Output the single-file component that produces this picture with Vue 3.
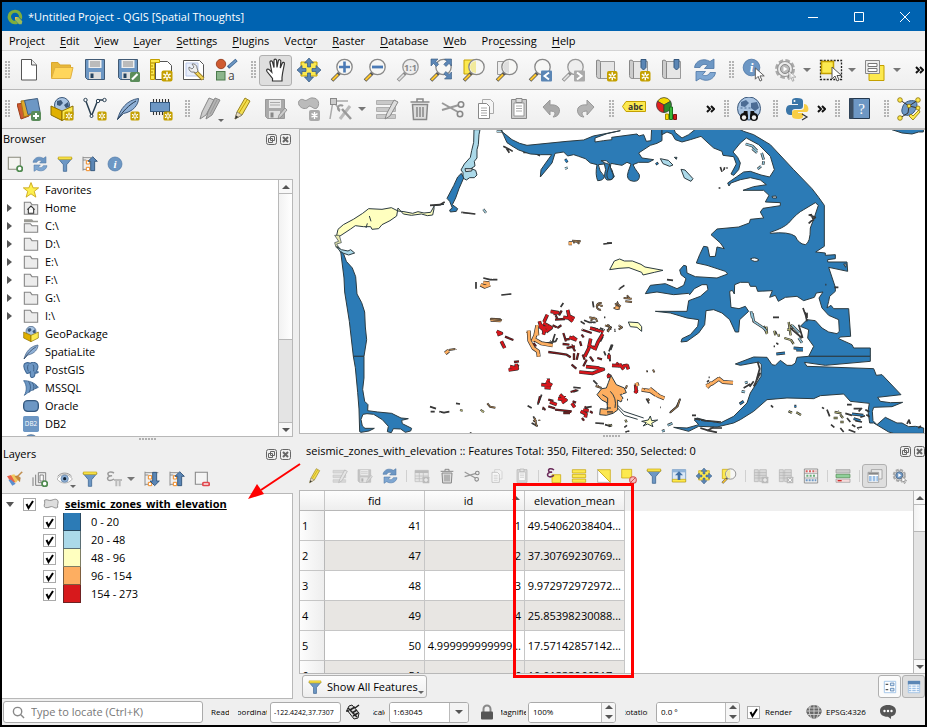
<script setup>
import { ref } from 'vue'

const menus = [
  ['Pro', 'j', 'ect'], ['', 'E', 'dit'], ['', 'V', 'iew'], ['', 'L', 'ayer'], ['', 'S', 'ettings'],
  ['', 'P', 'lugins'], ['Vect', 'o', 'r'], ['', 'R', 'aster'], ['', 'D', 'atabase'], ['', 'W', 'eb'],
  ['Pro', 'c', 'essing'], ['', 'H', 'elp'],
]

const btn = (icon, label, extra = {}) => ({ kind: 'btn', icon, label, ...extra })
const grip = { kind: 'grip' }

const mainTools = [
  grip,
  btn('new', 'New Project'), btn('open', 'Open Project'), btn('save', 'Save Project'),
  btn('saveas', 'Save Project As'), btn('newlayout', 'New Print Layout'),
  btn('layouts', 'Layout Manager'), btn('style', 'Style Manager'),
  grip,
  btn('pan', 'Pan Map', { on: true }), btn('pansel', 'Pan to Selection'), btn('zoomin', 'Zoom In'),
  btn('zoomout', 'Zoom Out'), btn('zoomnative', 'Zoom to Native Resolution'), btn('zoomfull', 'Zoom Full'),
  btn('zoomsel', 'Zoom to Selection'), btn('zoomlayer', 'Zoom to Layer'), btn('zoomlast', 'Zoom Last'),
  btn('zoomnext', 'Zoom Next'), btn('newmap', 'New Map View'), btn('newbook', 'New Bookmark'),
  btn('book', 'Show Bookmarks'), btn('refresh', 'Refresh'),
  grip,
  btn('identify', 'Identify'), btn('action', 'Run Action', { drop: true }),
  btn('select', 'Select Features', { drop: true }), btn('form', 'Select by Value', { drop: true }),
  { kind: 'more', cls: 'push' },
]
const layerTools = [
  grip,
  btn('datasource', 'Data Source Manager'), btn('newgpkg', 'New GeoPackage'), btn('newshape', 'New Shapefile'),
  btn('newspatial', 'New SpatiaLite'), btn('newmem', 'New Memory Layer'),
  grip,
  btn('edits', 'Current Edits', { tiny: true }), btn('pencil', 'Toggle Editing'), btn('saveedit', 'Save Edits'),
  btn('addpoly', 'Add Polygon'), btn('vertex', 'Vertex Tool', { drop: true }),
  btn('multiedit', 'Modify Attributes'), btn('trash', 'Delete Selected'), btn('cut', 'Cut'), btn('copy', 'Copy'),
  btn('paste', 'Paste'), btn('undo', 'Undo'), btn('redo', 'Redo'),
  grip,
  btn('abc', 'Labeling'), btn('diagram', 'Diagrams'), { kind: 'more', cls: 'wide' },
  grip, btn('metasearch', 'MetaSearch'),
  grip, btn('python', 'Python Console'), { kind: 'more', cls: '' },
  grip, btn('help', 'Help'),
  grip, btn('topology', 'Topology Checker'),
]
const browserTools = [btn('addlayer', 'Add Layer'), btn('refresh', 'Refresh'), btn('filter', 'Filter'), btn('collapse', 'Collapse All'), btn('info', 'Properties')]
const layersTools = [
  btn('brush', 'Layer Styling'), btn('addgroup', 'Add Group'), btn('eye', 'Map Themes', { tiny: true }),
  btn('filter', 'Filter Legend'), btn('epsfilter', 'Filter by Expression', { drop: true }),
  btn('expand', 'Expand All'), btn('collapse', 'Collapse All'), btn('remove', 'Remove Layer'),
]
const tableTools = [
  btn('pencil', 'Toggle Editing'), btn('multiedit', 'Multi Edit', { dim: true }), btn('saveedit', 'Save Edits', { dim: true }), btn('refresh', 'Reload'),
  { kind: 'sep' },
  btn('addrow', 'Add Feature', { dim: true }), btn('trash', 'Delete Features'), btn('cut', 'Cut'), btn('copy', 'Copy', { dim: true }), btn('paste', 'Paste', { dim: true }),
  { kind: 'sep' },
  btn('epssel', 'Select by Expression'), btn('selall', 'Select All'), btn('invert', 'Invert Selection'),
  btn('desel', 'Deselect'), btn('filter', 'Filter'), btn('movetop', 'Move to Top'), btn('pansel', 'Pan to Rows'),
  btn('zoomsel', 'Zoom to Rows'),
  { kind: 'sep' },
  btn('newfield', 'New Field', { dim: true }), btn('delfield', 'Delete Field', { dim: true }), btn('calc', 'Field Calculator'),
  { kind: 'sep' }, btn('condfmt', 'Conditional Formatting'),
  { kind: 'sep' }, btn('dock', 'Dock Table', { on: true }), btn('actions', 'Actions'),
]

const tree = [
  { icon: 'star', name: 'Favorites' },
  { icon: 'home', name: 'Home', arrow: true },
  { icon: 'drive', name: 'C:\\', arrow: true },
  { icon: 'folder', name: 'D:\\', arrow: true },
  { icon: 'folder', name: 'E:\\', arrow: true },
  { icon: 'folder', name: 'F:\\', arrow: true },
  { icon: 'folder', name: 'G:\\', arrow: true },
  { icon: 'folder', name: 'I:\\', arrow: true },
  { icon: 'gpkg', name: 'GeoPackage' },
  { icon: 'feather', name: 'SpatiaLite' },
  { icon: 'elephant', name: 'PostGIS' },
  { icon: 'mssql', name: 'MSSQL' },
  { icon: 'oracle', name: 'Oracle' },
  { icon: 'db2', name: 'DB2' },
  { icon: 'globe', name: '' },
]

const classes = ref([
  { c: 'c1', label: '0 - 20', on: true },
  { c: 'c2', label: '20 - 48', on: true },
  { c: 'c3', label: '48 - 96', on: true },
  { c: 'c4', label: '96 - 154', on: true },
  { c: 'c5', label: '154 - 273', on: true },
])
const layerOn = ref(true)
const render = ref(true)

const rows = [
  ['1', '41', '1', '49.54062038404...'],
  ['2', '47', '2', '37.30769230769...'],
  ['3', '48', '3', '9.972972972972...'],
  ['4', '49', '4', '25.85398230088...'],
  ['5', '50', '4.999999999999...', '17.57142857142...'],
  ['6', '51', '6', '10.01333966317...'],
]

// Small zones drawn as outlined streaks: w is the outline width, f the fill width.
const west = [
  { col: '#555', w: 5, f: 1, d: 'M390 232l30-2 14-8 M484 253l42 5 M604 501l30-3 M528 462v20 M550 450l20 5 22 0 M910 348l26-3 M390 836l18 6 M392 851h12 M418 851l14 3 16-3 M468 826l12 2 M610 55l20 10 8 5 M620 62l8 12 M670 73l30 0 20 10 M878 520l3 18 M790 525l-8 12 M852 577l15 6 20 0 M842 580l12 8 M912 568h4 M925 590l8 15 M945 608v3 M935 650l-8 20 M912 670l5 12 M925 680l6 20 M886 885l26 2 M915 890l15 4 M683 833l12 7 M700 865l8 15 M695 885l18 10 M820 778l22 2 M820 792l15-5 M725 800l-12 30 M860 838l15-2 M765 618l-8 25-20 2 M772 630l-5 10-20 4 M880 757l12 12 M512 912v2 M958 482v3 M900 600l14 6' },
  { col: '#8d1318', w: 7, f: 3, d: 'M790 615l8 25 M745 672l30 4 25 4 12 8 M815 650l10 20 M822 676v20 M800 660l25-5 M835 675l-5 20 M848 680l6 15 M615 626l25 10 M642 702l15-2 M645 710l12 4 M767 562l5 10 M785 548l-8 14 M765 575l30-2 M720 805l-5 20 M728 838l8 8 M765 845l50 5 M790 855h20 M745 815l15 4 M812 792l18-6 M818 820l10 4 M855 835l6 10 M870 850l8 5 M846 870l6 8 M875 600l20 5 M795 635l14-2 M845 620l6 8 M900 640l8-15 M845 605l30 10 M860 695l-10 20 M758 592l12 6 M772 600l12-8 M788 648l20 2 M840 640l4 14 M815 710l14 12 M870 686l10 14 M892 690l14 4 M745 835l20 6 M700 645l8 10' },
  { col: '#d7191c', w: 11, f: 7, d: 'M718 580l6 20 14 8 M742 560l-10 22 M752 550l22 4-14 2 M716 596l34 4 M730 585l24 14-16 12 M803 546l4 18 16 8 M790 568l16 2 12 10 M740 610l10-14 M725 590l8 24 M870 600l40 12 M908 618l-14 24-10 24 M872 632l-6 30-12 24 M864 650l22 12 M808 628l22 8 M838 732l40 4 32-12-16-2 M590 610l14 6-12 4 M604 640l6 12 4 8 M626 726l26-4-4-14 M630 716l18 4 M724 770l26 2 M738 762l18 10 M740 757l10 0 M734 778l18 2 M780 800l14 14 M774 812l24 4-12 8 M790 804v16 M750 822l20 8 M816 826l8 12 M842 850l16 8-2 10 M850 846l16 2 M948 706l12 8 M922 740l10 6 M858 716l40 4 M735 605l-5 15 M816 626l14 10' },
  { col: '#fdae61', w: 12, f: 8, d: 'M686 608l2 30 12 22 14 10 2 16 M712 592l-6 30-8 18 M700 632l24 14 34 6 M806 346h10 M436 676l10-8 M542 470l12 6 16-6 M550 464l18 2 M950 530l10 8 M572 575l30 2 M710 600l2 22' },
  { col: '#a07a50', w: 6, f: 3, d: 'M816 338l26 2 M820 345l8-6 10 8 M446 666l20-3 M570 573l36 4 M905 525c-22-2-16 24-2 20 M890 530l18 4 M868 568l20 4 4 10 M872 578l12-10 M915 592l18 6-12 10 M562 826l8 10 16 3 M945 530l10-6 M905 780l-18-6 M704 870l6 25 M718 875v4 M700 880l8-6' },
  { col: '#b9b97a', w: 6, f: 3, d: 'M480 846l8 2 M542 845l10 8 M925 890l8 4 M545 850h6' },
  { col: '#abd9e9', w: 7, f: 4, d: 'M550 244l8 10 M795 122l8-3 M590 10l18 0' },
  { col: '#2c7bb6', w: 12, f: 8, d: 'M796 100l6-4' },
]
const east = [
  { col: '#555', w: 5, f: 1, d: 'M0 345h14 M38 482l14-10 M180 455l18 2 M17 650l-6 16 M5 675l4 24 M340 117l5 14 M350 128l3-10 M358 120h4 M335 180h5 M498 568l18 0 M588 540l8 22 4 18 M600 570v-16 M605 260l20 8-20 18 M612 258l8 20 M682 478h12 M22 605h3 M118 812l8 14 M220 812l-12 25-20 18 M160 838h2 M305 748h3 M300 762l6-5 M60 815h3 M505 610l4 8 M508 645l6 4 M500 655h4 M492 832l6 6 M545 850l8 4 M255 862l12 0 M262 872l30 6 50 4 M280 900l25 8 25 5 M310 900l35 0 M300 908l20-10 M55 912l12-3 M5 895l10-3 M52 898l8-6 M645 838l6 4 M660 845l8 20 M720 830l14 0 M740 842h24 M765 840l-10 10 M715 856l20 6 M745 878l20 4 M760 868l14-5 M720 870l10 12 M735 890l10 6 M672 890l10 8 M700 900l10 12 M725 905l20 8 M750 900l15-3 M775 845l12 6 M778 860l10 6 M452 702l6 20-14 50 M440 760l-12 16 M460 735l-20 40 M410 780l20-12 M900 888l6-12 4 12 M934 900l8-6 M655 470h3 M575 590l12 40 M550 600l35 30 M120 730h3' },
  { col: '#a07a50', w: 6, f: 3, d: 'M50 510l24 2 M55 520l20 2 M20 540l18 2 M30 530l8 8 M60 502l10 12 M0 590l10 8-8 14 M35 592l10 6-10 6 M138 725l4 8 M122 812l5 6 M118 730h2 M60 772l-4 10 M218 815l-6 20-22 18 M0 853l18 0' },
  { col: '#b9b97a', w: 7, f: 3, d: 'M545 582l6 40 M552 590l8 12 M540 605h10 M470 594l10 24 M478 596l2 20 M502 608l3 14 M514 618l2 8 M532 630l20 6 8 12 M568 853l14 8 M683 852l20 4 M700 860l8 10 M680 870h12 M700 882h10 M545 850l10 4 M55 875l4 8 M10 890l4 4' },
  { col: '#8fc3d8', w: 8, f: 4, d: 'M436 556l4 24 30 20 8 8 M432 550l4 20 M555 592l22 22 M575 630l10 14 M416 48l20 6 14 14 M436 62l14 12 M464 75l6 20 M470 100l-2 10 M462 115l-10 8 M165 910l8-3 M182 892l14-6 M414 765l8-3 M404 790l10 2' },
  { col: '#2c7bb6', w: 9, f: 4, d: 'M508 678l26-3 M560 660l28 2 M568 666l20 0 M562 835h6 M398 828l12-8 M148 104l4 6 M735 858l34 4 M740 872l20 6' },
  { col: '#d7191c', w: 11, f: 7, d: 'M15 712l30 2 M38 708l12 16 M60 710l4 14 M48 714l14-2 M0 745h6 M86 770l2 25 M90 785l-6 10 M6 680v12' },
  { col: '#fdae61', w: 12, f: 8, d: 'M104 785l26 4 18 12 24 10 M128 782l30 24 M298 774l18-8 20-14 12 10 30 2 M300 778l14-14 M25 538l10 2 M88 764l4 10' },
]
</script>

<template>
  <div class="window">
    <!-- shared icon shapes -->
    <svg class="defs" aria-hidden="true">
      <defs>
        <filter id="rough" x="-5%" y="-5%" width="110%" height="110%"><feTurbulence type="fractalNoise" baseFrequency=".12" numOctaves="2" seed="4" result="n" /><feDisplacementMap in="SourceGraphic" in2="n" scale="5" xChannelSelector="R" yChannelSelector="G" /></filter>
        <symbol id="star9" viewBox="0 0 12 12"><rect x=".5" y=".5" width="11" height="11" rx="2" fill="#c4a000" /><path d="M6 1.800v8.400M2.400 3.900l7.200 4.200M9.600 3.900L2.400 8.100" stroke="#fff" stroke-width="1.500" /><circle cx="6" cy="6" r="1.100" fill="#c4a000" /></symbol>
        <symbol id="lens" viewBox="0 0 24 24"><path d="M2 22.500L9.500 15" stroke="#555" stroke-width="3.600" /><path d="M2.500 22L8 16.500" stroke="#fcc62d" stroke-width="2.200" /><circle cx="14.500" cy="9" r="7.700" fill="#f7f7f5" stroke="#888" stroke-width="1.300" /></symbol>
        <symbol id="lensgray" viewBox="0 0 24 24"><path d="M2 22.500L9.500 15" stroke="#888" stroke-width="3.600" /><path d="M2.500 22L8 16.500" stroke="#ddd" stroke-width="2" /><circle cx="14.500" cy="9" r="7.700" fill="#eee" stroke="#999" stroke-width="1.300" /></symbol>
        <symbol id="cursor" viewBox="0 0 12 16"><path d="M1 1v12l3-3 2 5 2-1-2-4.500h4.500z" fill="#fff" stroke="#555" stroke-width="1" /></symbol>
        <symbol id="i-new" viewBox="0 0 24 24"><path d="M4.500 1.500h10l5 5.500v15h-15z" fill="#fff" stroke="#555" /><path d="M14.500 1.500V7h5" fill="#eee" stroke="#555" /></symbol>
        <symbol id="i-open" viewBox="0 0 24 24"><path d="M1.500 20V4.500H8l2 2.500h10.500v4" fill="#e8b83a" stroke="#d9a72d" /><path d="M1.500 20.500L5 9.500h18L20.500 20.500z" fill="#ffd65b" stroke="#e0b040" /></symbol>
        <symbol id="i-save" viewBox="0 0 24 24"><path d="M2.500 1.500h19v20H4.500l-2-2z" fill="#6d97c4" stroke="#415a75" /><path d="M5.500 2h13v8h-13z" fill="#eee" /><path d="M7 4h10M7 6h10M7 8h10" stroke="#888" /><path d="M6 14h12v7H6z" fill="#ddd" /><path d="M7.500 15.500h3v4.500h-3z" fill="#24425f" /></symbol>
        <symbol id="i-saveas" viewBox="0 0 24 24"><use href="#i-save" width="24" height="24" /><rect x="14" y="14" width="10" height="10" rx="1.500" fill="#5a8c5a" /><path d="M16 21.500l5.500-5.500" stroke="#fff" stroke-width="2.200" /></symbol>
        <symbol id="i-newlayout" viewBox="0 0 24 24"><path d="M6.500 3.500h12l4 4v14h-16z" fill="#fff" stroke="#555" /><path d="M1.500 1.500h9v3h-5v17h-4z" fill="#fce94f" stroke="#c4a000" /><path d="M2 8h2M2 11h3M2 14h2M2 17h3M2 5h3" stroke="#a98500" /><use href="#star9" x="12" y="12" width="12" height="12" /></symbol>
        <symbol id="i-layouts" viewBox="0 0 24 24"><path d="M1.500 2.500h16l4 4v15h-20z" fill="#fff" stroke="#555" /><path d="M4 5h12v13H4z" fill="#e8eefa" stroke="#b9c6e8" /><path d="M13 13l8 8" stroke="#9a7b20" stroke-width="4" /><path d="M13 13l8 8" stroke="#f2d65a" stroke-width="2.400" /><path d="M7 9a4 4 0 0 0 5 5l2 1 2-2-1-3a4 4 0 0 0-5-4l2 3-2 2z" fill="#eee" stroke="#666" stroke-width=".8" /></symbol>
        <symbol id="i-style" viewBox="0 0 24 24"><circle cx="6" cy="6" r="4.700" fill="#cf5a30" stroke="#8f3514" stroke-width=".8" /><path d="M21.500 2L13 9.500" stroke="#3f6793" stroke-width="3.400" /><path d="M21 2.500L14 8.500" stroke="#6d97c4" stroke-width="1.800" /><rect x="1.500" y="13.500" width="8.500" height="8.500" fill="#8bb58b" stroke="#4c7a4c" /><text x="13" y="22" font-size="12" fill="#444" font-family="Open Sans, sans-serif">a</text></symbol>
        <symbol id="i-pan" viewBox="0 0 24 24"><path d="M8.500 23v-2.500L3 13.500c-1.200-2 .8-3.200 2.200-1.800l2.600 2.600L6 4.500C5.700 2.700 8 2.300 8.500 4L10 9.500V2.500c0-1.900 2.400-1.900 2.600 0L13 9.500l1.300-6.700c.4-1.700 2.700-1.300 2.500.5L16.300 10l1.900-4.800c.7-1.500 2.500-.8 2.200.7L18.600 15 18 19.500V23z" fill="#fff" stroke="#333" stroke-width="1.200" /></symbol>
        <symbol id="i-pansel" viewBox="0 0 24 24"><path d="M4 4h16v14H4z" fill="#fce94f" stroke="#c4a000" /><path d="M12 0l4.500 5h-3v4h-3V5h-3zM12 24l4.500-5h-3v-4h-3v4h-3zM0 12l5-4.500v3h4v3H5v3zM24 12l-5-4.500v3h-4v3h4v3z" fill="#5b86b5" stroke="#35587e" stroke-width=".7" /></symbol>
        <symbol id="i-zoomin" viewBox="0 0 24 24"><use href="#lens" width="24" height="24" /><path d="M9 9h11M14.500 3.500v11" stroke="#4b7ab5" stroke-width="2.600" /></symbol>
        <symbol id="i-zoomout" viewBox="0 0 24 24"><use href="#lens" width="24" height="24" /><path d="M9 9h11" stroke="#4b7ab5" stroke-width="2.800" /></symbol>
        <symbol id="i-zoomnative" viewBox="0 0 24 24"><use href="#lensgray" width="24" height="24" /><text x="14.500" y="12.500" text-anchor="middle" font-size="9" font-weight="700" fill="#888" font-family="Open Sans, sans-serif">1:1</text></symbol>
        <symbol id="i-zoomfull" viewBox="0 0 24 24"><use href="#lens" width="24" height="24" /><path d="M2 1h7L6.700 3.300l3 3L7.500 8.500l-3-3L2 8zM22.500 1h-7l2.300 2.300-3 3L17 8.500l3-3L22.500 8zM22.500 21h-7l2.300-2.300-3-3L17 13.500l3 3 2.500-2.500z" fill="#5b86b5" stroke="#35587e" stroke-width=".6" /></symbol>
        <symbol id="i-zoomsel" viewBox="0 0 24 24"><path d="M2 2h12v14H2z" fill="#fce94f" stroke="#c4a000" /><use href="#lens" width="24" height="24" /><path d="M14 3a6 6 0 0 0 0 12z" fill="#f2ea9c" /></symbol>
        <symbol id="i-zoomlayer" viewBox="0 0 24 24"><path d="M2.500 3.500h12v13h-12z" fill="#eee" stroke="#999" /><use href="#lens" width="24" height="24" /><path d="M14 3a6 6 0 0 0 0 12z" fill="#ddd" /></symbol>
        <symbol id="i-zoomlast" viewBox="0 0 24 24"><use href="#lens" width="24" height="24" /><rect x="13" y="12.500" width="11" height="11" rx="1" fill="#5b86b5" /><path d="M21 14.500l-4.500 3.500 4.500 3.500" fill="none" stroke="#fff" stroke-width="2" /></symbol>
        <symbol id="i-zoomnext" viewBox="0 0 24 24"><use href="#lensgray" width="24" height="24" /><rect x="13" y="12.500" width="11" height="11" rx="1" fill="#aaa" /><path d="M16 14.500l4.500 3.500-4.500 3.500" fill="none" stroke="#fff" stroke-width="2" /></symbol>
        <symbol id="i-mapsheet" viewBox="0 0 24 24"><path d="M5.500 3.500h15v17h-15z" fill="#e6e6e6" stroke="#999" /><path d="M2.500 2.500c2-1 4 0 4 2v16h-1c-2 0-3-1-3-3z" fill="#ccc" stroke="#888" /></symbol>
        <symbol id="i-newmap" viewBox="0 0 24 24"><use href="#i-mapsheet" width="24" height="24" /><use href="#star9" x="12.500" y="12.500" width="11.500" height="11.500" /></symbol>
        <symbol id="i-book" viewBox="0 0 24 24"><use href="#i-mapsheet" width="24" height="24" /><path d="M14 1.500h5v8L16.500 12 14 9.500z" fill="#5b86b5" stroke="#35587e" /></symbol>
        <symbol id="i-newbook" viewBox="0 0 24 24"><use href="#i-book" width="24" height="24" /><use href="#star9" x="12.500" y="12.500" width="11.500" height="11.500" /></symbol>
        <symbol id="i-refresh" viewBox="0 0 24 24"><path d="M1.500 9.500c1-7 9-10 15.500-6l4-2.500v9.500h-9.500l3-3.200c-3-1.800-6-.8-7.500 2.200z" fill="#6d97c4" stroke="#4b75a5" stroke-width=".8" /><path d="M22.500 14.500c-1 7-9 10-15.500 6L3 23v-9.500h9.500l-3 3.200c3 1.800 6 .8 7.500-2.200z" fill="#7fa7d2" stroke="#4b75a5" stroke-width=".8" /></symbol>
        <symbol id="i-info" viewBox="0 0 24 24"><circle cx="12" cy="12" r="10.500" fill="#6d97c4" stroke="#4b75a5" /><text x="12" y="18" text-anchor="middle" font-size="17" font-style="italic" font-weight="700" fill="#fff" font-family="Liberation Serif, serif">i</text></symbol>
        <symbol id="i-identify" viewBox="0 0 24 24"><use href="#i-info" width="19" height="19" /><use href="#cursor" x="12" y="9" width="12" height="15" /></symbol>
        <symbol id="i-gear" viewBox="0 0 24 24"><circle cx="11" cy="11" r="8.500" fill="#eee" stroke="#aaa" stroke-width="3" stroke-dasharray="4.500 2.200" /><circle cx="11" cy="11" r="7.500" fill="#ececec" stroke="#999" stroke-width="1.200" /></symbol>
        <symbol id="i-action" viewBox="0 0 24 24"><use href="#i-gear" width="24" height="24" /><circle cx="11" cy="11" r="4.500" fill="#bbb" stroke="#888" /><path d="M9.500 8.500l4 2.500-4 2.500z" fill="#fff" /><use href="#cursor" x="14" y="12" width="9" height="12" opacity=".6" /></symbol>
        <symbol id="i-actions" viewBox="0 0 24 24"><use href="#i-gear" width="24" height="24" /><circle cx="11" cy="11" r="5.500" fill="#6d97c4" stroke="#456" /><path d="M9.500 8l4.500 3-4.500 3z" fill="#fff" /><use href="#cursor" x="14" y="12" width="9" height="12" /></symbol>
        <symbol id="i-select" viewBox="0 0 24 24"><path d="M1.500 2.500h21v19h-21z" fill="#eee" stroke="#222" stroke-width="1.300" stroke-dasharray="2 1.300" /><path d="M2.500 3.500h12v12h-12z" fill="#fce94f" stroke="#c4a000" stroke-width="1.500" /><use href="#cursor" x="12" y="8" width="12" height="16" /></symbol>
        <symbol id="i-form" viewBox="0 0 24 24"><path d="M5 7.500h15v15H5z" fill="#fce94f" stroke="#c4a000" /><path d="M1.500 2.500h14v13h-14z" fill="#eee" stroke="#888" /><path d="M4 5.500h9v3H4zM4 10.500h9v3H4z" fill="#fff" stroke="#777" /></symbol>
        <symbol id="i-datasource" viewBox="0 0 24 24"><path d="M0 7l8-1 4 13-8 3z" fill="#cf5a30" stroke="#9c3c18" /><path d="M4 4l9-1 3 14-9 3z" fill="#e0a82c" stroke="#a87916" /><path d="M7.500 3.500l13-2 2.500 13-12 3z" fill="#6d97c4" stroke="#3f5d80" /><rect x="14" y="14" width="10" height="10" rx="2" fill="#5a8c5a" /><path d="M16 19h6M19 16v6" stroke="#fff" stroke-width="2" /></symbol>
        <symbol id="i-gpkg" viewBox="0 0 24 24"><circle cx="12" cy="8" r="7.500" fill="#a9c4e2" stroke="#3c587a" /><path d="M7 4l4-1 2 3-3 3-3-1zM14 8l4-3 1 5-3 1z" fill="#3c587a" /><path d="M1 9l11 5v9.500L1 18z" fill="#e0b000" stroke="#8a6d00" /><path d="M23 9l-11 5v9.500L23 18z" fill="#fce94f" stroke="#8a6d00" /></symbol>
        <symbol id="i-newgpkg" viewBox="0 0 24 24"><use href="#i-gpkg" width="24" height="24" /><use href="#star9" x="14" y="14" width="10" height="10" /></symbol>
        <symbol id="i-newshape" viewBox="0 0 24 24"><path d="M2.500 3L8.500 19l6-15M16 3h5" fill="none" stroke="#2b4052" stroke-width="1.500" /><g fill="#fff" stroke="#2b4052"><circle cx="2.500" cy="3" r="1.700" /><circle cx="8.500" cy="19" r="1.500" /><circle cx="15" cy="4" r="1.700" /><circle cx="21.500" cy="3" r="1.700" /></g><use href="#star9" x="14" y="14" width="10" height="10" /></symbol>
        <symbol id="i-feather" viewBox="0 0 24 24"><path d="M1.500 22.500C4 12 11 3 22.500 1.500c0 6-5 13-15 15z" fill="#8fb0d6" stroke="#3c587a" /><path d="M1.500 22.500C7 14 13 8 20 4" fill="none" stroke="#24384e" /></symbol>
        <symbol id="i-newspatial" viewBox="0 0 24 24"><use href="#i-feather" width="24" height="24" /><use href="#star9" x="14" y="14" width="10" height="10" /></symbol>
        <symbol id="i-newmem" viewBox="0 0 24 24"><path d="M4.500 2v16M7.500 2v16M10.500 2v16M13.500 2v16M16.500 2v16M19.500 2v16" stroke="#333" stroke-width="1.100" /><rect x="1.500" y="5.500" width="19" height="9" fill="#6d97c4" stroke="#35587e" /><use href="#star9" x="14" y="14" width="10" height="10" /></symbol>
        <symbol id="i-edits" viewBox="0 0 24 24"><path d="M2 22l2-7L11 1l5 2-8 15z" fill="#ccc" stroke="#888" /><path d="M8 22l2-7L17 1l5 2-8 15z" fill="#b4b4b4" stroke="#888" /><path d="M12 17L19 3" stroke="#999" /></symbol>
        <symbol id="i-pencil" viewBox="0 0 24 24"><path d="M4 22l2-7L14 1l5 3-8 14z" fill="#f2de52" stroke="#9a8420" /><path d="M8 16L16 3" stroke="#c4a000" /><path d="M4 22l2-7 5 3z" fill="#eadcc0" stroke="#777" stroke-width=".7" /><path d="M4 22l1-3.500 2.500 1.500z" fill="#333" /></symbol>
        <symbol id="i-saveedit" viewBox="0 0 24 24"><path d="M1.500 2.500h19v19h-17l-2-2z" fill="#aaa" stroke="#999" /><path d="M5 3h12v8H5z" fill="#e8e8e8" /><path d="M6 5.500h10M6 8h10" stroke="#aaa" /><path d="M5 14h11v7H5z" fill="#e0e0e0" /><path d="M6.500 15.500h3v5h-3z" fill="#888" /><path d="M14 22l1-4 6-7 2 2-6 7z" fill="#ccc" stroke="#888" stroke-width=".8" /></symbol>
        <symbol id="i-addpoly" viewBox="0 0 24 24"><path d="M2 8c-2-4 2-7 5-5 3 2 5-3 9-2 6 0 7 7 4 10-3 2-5-2-8-2-2 4-8 3-10-1z" fill="#bbb" stroke="#999" /><rect x="12" y="13" width="11" height="11" rx="2" fill="#aaa" /><path d="M17.500 15v7M14.500 16.700l6 3.500M20.500 16.700l-6 3.500" stroke="#fff" stroke-width="1.400" /></symbol>
        <symbol id="i-vertex" viewBox="0 0 24 24"><path d="M4 4l-3 18M5 4h14M4 4l7 9" stroke="#aaa" stroke-width="1.500" fill="none" /><rect x="1.500" y="1.500" width="6" height="6" fill="#ccc" stroke="#888" /><path d="M11 22L21 9" stroke="#bbb" stroke-width="3" /><path d="M13 12l9 10" stroke="#999" stroke-width="2.500" /><path d="M14 9a3 3 0 1 0-3 5" fill="none" stroke="#999" stroke-width="2" /></symbol>
        <symbol id="i-multiedit" viewBox="0 0 24 24"><path d="M1.500 3.500h19v4h-19zM1.500 10.500h19v4h-19zM1.500 17.500h19v4h-19z" fill="#c9c9c9" stroke="#b0b0b0" /><path d="M10 22l2-6 7-13 4 2-8 14z" fill="#ddd" stroke="#888" /></symbol>
        <symbol id="i-trash" viewBox="0 0 24 24"><path d="M4.500 7.500h15l-1 15h-13z" fill="#ddd" stroke="#888" stroke-width="1.500" /><path d="M9 10v10M12 10v10M15 10v10M2.500 5h19M9 4.500V2h6v2.500" fill="none" stroke="#888" stroke-width="1.500" /></symbol>
        <symbol id="i-cut" viewBox="0 0 24 24"><path d="M1 6l16 9M1 13l17-5" stroke="#999" stroke-width="2" /><circle cx="20" cy="7.500" r="2.700" fill="none" stroke="#888" stroke-width="1.600" /><circle cx="19" cy="17" r="2.700" fill="none" stroke="#888" stroke-width="1.600" /></symbol>
        <symbol id="i-copy" viewBox="0 0 24 24"><path d="M8.500 2.500h8l3 3v11h-11z" fill="#f5f5f5" stroke="#aaa" /><path d="M4.500 6.500h8l3 3v12h-11z" fill="#fff" stroke="#888" /><path d="M7 11h6M7 13.500h6M7 16h6M7 18.500h6" stroke="#aaa" /></symbol>
        <symbol id="i-paste" viewBox="0 0 24 24"><path d="M4.500 2.500h15v19h-15z" fill="#ccc" stroke="#888" /><path d="M7 6h10v13H7z" fill="#fff" stroke="#999" /><path d="M9 1.500h6v4H9z" fill="#ddd" stroke="#888" /><path d="M9 9h6M9 11.500h6M9 14h6" stroke="#aaa" /></symbol>
        <symbol id="i-undo" viewBox="0 0 24 24"><path d="M10 3v5c7-1 11 3 9 8-1 3-4 4-6 4 3-3 3-6-3-6v4L3 10z" fill="#aaa" stroke="#999" /></symbol>
        <symbol id="i-redo" viewBox="0 0 24 24"><path d="M14 3v5C7 7 3 11 5 16c1 3 4 4 6 4-3-3-3-6 3-6v4l7-8z" fill="#b4b4b4" stroke="#999" /></symbol>
        <symbol id="i-abc" viewBox="0 0 24 24"><path d="M4 4.500h19.500v10H4L.5 9.500z" fill="#fce94f" stroke="#c4a000" /><text x="13.500" y="12.500" text-anchor="middle" font-size="8.500" font-weight="700" fill="#333" font-family="Open Sans, sans-serif">abc</text></symbol>
        <symbol id="i-diagram" viewBox="0 0 24 24"><path d="M9 8L2.500 4.300A7.500 7.500 0 0 1 15.500 4.300z" fill="#f5d800" stroke="#333" stroke-width=".7" /><path d="M9 8L2.500 4.300A7.500 7.500 0 0 0 9 15.500z" fill="#e02020" stroke="#333" stroke-width=".7" /><path d="M9 8l6.500-3.700A7.500 7.500 0 0 1 9 15.500z" fill="#2c8a2c" stroke="#333" stroke-width=".7" /><path d="M10.500 17h3v5.500h-3z" fill="#f5d800" stroke="#a08a00" /><path d="M14.500 10h3v12.500h-3z" fill="#3ab83a" stroke="#1c701c" /><path d="M18.500 17.500h3v5h-3z" fill="#d01818" stroke="#801010" /></symbol>
        <symbol id="i-metasearch" viewBox="0 0 24 24"><circle cx="12" cy="11.500" r="11.500" fill="#a9c4e2" stroke="#3c587a" /><path d="M4 5l5-2 3 3-4 4-4-1zM14 6l6-1 2 6-4 3-4-3z" fill="#4c6c94" /><path d="M3.500 11h17" stroke="#4c6c94" stroke-dasharray="2 2" /><path d="M7 14h3.500l.5 8H4.500zM17 14h-3.500l-.5 8h6.500z" fill="#111" /><circle cx="7" cy="20" r="4" fill="#111" /><circle cx="17" cy="20" r="4" fill="#111" /><circle cx="7" cy="20.500" r="2.200" fill="#eee" /><circle cx="17" cy="20.500" r="2.200" fill="#eee" /></symbol>
        <symbol id="i-python" viewBox="0 0 24 24"><path d="M11 1c-4 0-5 1-5 3v3h6v1H4c-3 0-4 3-4 5s1 5 4 5h2v-3c0-2 1-3 3-3h5c2 0 3-1 3-3V4c0-2-2-3-6-3z" fill="#3b76a8" /><circle cx="8.500" cy="4" r="1" fill="#fff" /><path d="M12 22c4 0 5-1 5-3v-3h-5v-1h8c2 0 3-2 2-5-.5-2-2-3-4-3v3c0 2-1 3-3 3H9c-2 0-3 1-3 3v3c0 2 2 3 6 3z" fill="#f8ce45" /><path d="M16 17l5 3-5 3" stroke="#333" stroke-width="1.200" fill="none" /></symbol>
        <symbol id="i-help" viewBox="0 0 24 24"><path d="M1.500 1.500h20v20h-20z" fill="#6d97c4" stroke="#24384e" /><path d="M1.500 1.500h4v20h-4z" fill="#3c4f63" /><text x="13.500" y="17" text-anchor="middle" font-size="15" fill="#fff" font-family="Liberation Serif, serif">?</text></symbol>
        <symbol id="i-topology" viewBox="0 0 24 24"><path d="M6 9C8 4 14 3 18 4c4 3 1 8-1 11-3 4-9 4-11 2-2-3-1-5 0-8z" fill="#6d97c4" stroke="#35587e" /><path d="M3 3l9 6 9-6M12 9l-1 7-8 5M12 9l9 2" stroke="#333" fill="none" /><g fill="#fce94f" stroke="#8a7000" stroke-width=".8"><circle cx="3" cy="3" r="2.300" /><circle cx="21" cy="3" r="2.300" /><circle cx="3" cy="21" r="2.300" /><circle cx="12" cy="9" r="1.800" /><circle cx="21" cy="11" r="2" /><path d="M12 19l2-2 2 2 6-6 1 2-7 8z" /></g></symbol>
        <symbol id="i-addlayer" viewBox="0 0 24 24"><path d="M2 2h18v18H2z" fill="#f4f4f0" stroke="#8a8a7c" stroke-width="1.600" /><circle cx="19" cy="19" r="4" fill="#fff" stroke="#4f8a4f" stroke-width="2.600" /></symbol>
        <symbol id="i-filter" viewBox="0 0 24 24"><path d="M1.500 3.500h21L14.500 13v10h-5V13z" fill="#6d97c4" stroke="#3f6793" stroke-width="1.200" /><path d="M2 1.500h20v3.500H2z" fill="#fce94f" stroke="#c4a000" /></symbol>
        <symbol id="i-collapse" viewBox="0 0 24 24"><path d="M1.500 1v21M1.500 6h5M1.500 20h5M1.500 2.500h12" stroke="#888" stroke-width="1.400" fill="none" /><path d="M6.500 7h5v5h-5zM6.500 17h5v5h-5z" fill="#fff" stroke="#f08a24" stroke-width="1.500" /><path d="M16 1l7 7h-4v14h-6V8H9z" fill="#5b86b5" stroke="#24476e" stroke-width="1.200" /></symbol>
        <symbol id="i-expand" viewBox="0 0 24 24"><path d="M1.500 1v21M1.500 6h5M1.500 20h5M1.500 2.500h20" stroke="#888" stroke-width="1.400" fill="none" /><path d="M6.500 7h5v5h-5zM6.500 17h5v5h-5z" fill="#fff" stroke="#f08a24" stroke-width="1.500" /><path d="M16 22l7-7h-4V2h-6v13H9z" fill="#5b86b5" stroke="#24476e" stroke-width="1.200" /></symbol>
        <symbol id="i-brush" viewBox="0 0 24 24"><path d="M0 8l6-2 8 9-6 5z" fill="#e8604a" /><path d="M6 6l5-1 6 8-4 5z" fill="#f0c860" /><path d="M2 13l4 0 7 6-5 3z" fill="#5a8fd0" /><path d="M12 8l7 8 1-6-3-2 6-6-1-1-6 6z" fill="#c98a3a" stroke="#a8702a" stroke-width=".7" /></symbol>
        <symbol id="i-addgroup" viewBox="0 0 24 24"><path d="M9.500 2.500h11v15h-11z" fill="#eee" stroke="#777" stroke-width="1.300" /><path d="M5.500 5.500v16h11M1.500 9.500v13" fill="none" stroke="#777" stroke-width="1.400" /><path d="M12 6h5v9h-5z" fill="#fff" stroke="#555" /><circle cx="19" cy="19" r="4" fill="#fff" stroke="#4f8a4f" stroke-width="2.600" /></symbol>
        <symbol id="i-eye" viewBox="0 0 24 24"><path d="M0 12C6 3 17 3 23 12 17 20 6 20 0 12z" fill="#fff" stroke="#aaa" stroke-width="1.300" /><path d="M1 8C7 1 17 2 22 8" fill="none" stroke="#999" stroke-width="1.500" /><circle cx="11.500" cy="11.500" r="5.500" fill="#8fb0d6" stroke="#5b7ba0" /><circle cx="11.500" cy="11.500" r="2.400" fill="#123" /></symbol>
        <symbol id="i-epsfilter" viewBox="0 0 24 24"><path d="M12 3C7 0 2 2 3 5c0 2 3 3 6 2-5 0-8 3-6 6 2 2 6 1 9-1" fill="none" stroke="#999" stroke-width="2.200" /><path d="M12 12h12v3h-2v8h-3v-8h-2v8h-3v-8h-2z" fill="#bbb" /></symbol>
        <symbol id="i-remove" viewBox="0 0 24 24"><path d="M2 2h18v18H2z" fill="#f4f4f4" stroke="#888" stroke-width="1.600" /><rect x="12" y="16" width="12" height="7" rx="2.500" fill="#e0464c" /><path d="M14.500 19.500h7" stroke="#fff" stroke-width="2" /></symbol>
        <symbol id="i-addrow" viewBox="0 0 24 24"><path d="M1.500 3.500h20v17h-20z" fill="#ddd" stroke="#999" /><path d="M1.500 3.500h20v4h-20z" fill="#999" /><path d="M1.500 12h20M1.500 16h20M8 7v13M14 7v13" stroke="#999" /><rect x="13" y="13" width="10" height="10" rx="1" fill="#999" /><path d="M18 15v6M15 18h6" stroke="#fff" stroke-width="1.500" /></symbol>
        <symbol id="i-epssel" viewBox="0 0 24 24"><path d="M9 10h13v12H9z" fill="#fce94f" stroke="#c4a000" /><path d="M12 3C8 0 3 1 4 4c0 2 3 3 5 2-5 0-8 3-6 6 2 2 6 1 9-1" fill="none" stroke="#6a2a5a" stroke-width="2.300" /></symbol>
        <symbol id="i-selall" viewBox="0 0 24 24"><path d="M2 2.500h20v5H2zM2 9.500h20v5H2zM2 16.500h20v5H2z" fill="#fce94f" stroke="#c4a000" /></symbol>
        <symbol id="i-invert" viewBox="0 0 24 24"><path d="M2.500 2.500v19h19z" fill="#fff" stroke="#999" /><path d="M2.500 2.500h19v19z" fill="#fce94f" stroke="#c4a000" /></symbol>
        <symbol id="i-desel" viewBox="0 0 24 24"><path d="M1 2h15v13H1z" fill="#fce94f" stroke="#c4a000" /><circle cx="18" cy="18" r="5" fill="#f5c0c0" stroke="#d05050" stroke-width="1.600" /><path d="M15 21l6-6" stroke="#d05050" stroke-width="1.500" /></symbol>
        <symbol id="i-movetop" viewBox="0 0 24 24"><path d="M2 2.500h20v18H2z" fill="#dbe8f5" stroke="#5b86b5" /><path d="M2 2.500h20v4H2z" fill="#8fb4da" /><path d="M2 17h20v4H2z" fill="#fce94f" stroke="#c4a000" /><path d="M12 5l6 6h-4v7h-4v-7H6z" fill="#3f6fa5" /></symbol>
        <symbol id="i-newfield" viewBox="0 0 24 24"><path d="M2 2.500h6v18H2zM10 2.500h10v18H10z" fill="#ccc" stroke="#888" /><path d="M2 7h18M2 11h18M2 15h18" stroke="#888" /><rect x="13" y="13" width="10" height="10" rx="1" fill="#999" /><path d="M18 15v6M15 18h6" stroke="#fff" stroke-width="1.500" /></symbol>
        <symbol id="i-delfield" viewBox="0 0 24 24"><path d="M2 2.500h6v18H2zM10 2.500h10v18H10z" fill="#ccc" stroke="#888" /><path d="M2 7h18M2 11h18M2 15h18" stroke="#888" /><rect x="13" y="13" width="10" height="10" rx="1" fill="#999" /><path d="M15.500 15.500l5 5M20.500 15.500l-5 5" stroke="#fff" stroke-width="1.500" /></symbol>
        <symbol id="i-calc" viewBox="0 0 24 24"><path d="M2 1.500h20v21H2z" fill="#f2f2f2" stroke="#888" stroke-width="1.300" /><path d="M2 8h20M2 15h20" stroke="#888" /><path d="M4 5h16" stroke="#d86060" stroke-width="3" stroke-dasharray="3 2" /><path d="M5 11.500h14" stroke="#6ab07a" stroke-width="3" stroke-dasharray="3 2" /><path d="M4 18.500h16" stroke="#6d97c4" stroke-width="3" stroke-dasharray="3 1.500" /></symbol>
        <symbol id="i-condfmt" viewBox="0 0 24 24"><path d="M1.500 2.500h21v5h-21z" fill="#ccc" stroke="#999" /><path d="M1.500 9.500h21v5h-21z" fill="#8fd09a" stroke="#4f8a4f" /><path d="M1.500 16.500h21v5h-21z" fill="#f5dada" stroke="#999" /><path d="M4 19h6" stroke="#d02b2b" stroke-width="2" /></symbol>
        <symbol id="i-dock" viewBox="0 0 24 24"><path d="M6.500 2.500h16v14h-16z" fill="#eee" stroke="#888" /><path d="M1.500 6.500h16v15h-16z" fill="#fff" stroke="#888" /><path d="M2 7h15v3H2z" fill="#888" /><path d="M3 12h4v8H3zM8.500 12h4v8h-4zM14 12h2.500v8H14z" fill="#9cc0e6" /></symbol>
        <symbol id="i-star" viewBox="0 0 24 24"><path d="M12 .8l3.200 8h8.300l-6.600 5.200 2.400 8.700L12 17.800l-7.300 4.900L7.100 14 .5 8.800h8.300z" fill="#fdf04f" stroke="#c8a415" stroke-width="1.300" /></symbol>
        <symbol id="i-folder" viewBox="0 0 24 24"><path d="M2 21.500v-18h9l2.500 3.500H22v14.500z" fill="#ececec" stroke="#848484" stroke-width="1.600" /></symbol>
        <symbol id="i-home" viewBox="0 0 24 24"><use href="#i-folder" width="24" height="24" /><path d="M6.500 14.500L12 9l5.500 5.500M8 13.500v6.500h8v-6.500" fill="#fff" stroke="#333" stroke-width="1.600" /></symbol>
        <symbol id="i-drive" viewBox="0 0 24 24"><path d="M1.500 2h12l2 2h7v2.500h-21z" fill="#9a9a94" /><path d="M2 21.500v-13h9l2.500 3H22v10z" fill="#ececec" stroke="#848484" stroke-width="1.600" /></symbol>
        <symbol id="i-elephant" viewBox="0 0 24 24"><path d="M2 3c3-3 7-2 9-1 3-2 7-2 10 1 3 4 1 8-1 11l3 1c-1 2-4 2-5 1 0 3 0 6-3 7s-4-1-4-4v-4c-2 2-5 3-6 1C3 13 0 7 2 3z" fill="#6d97c4" stroke="#3f6793" stroke-width="1.600" /><path d="M8 4c-2 3-1 7 0 10M15 4c2 3 1 6 1 10" fill="none" stroke="#35587e" stroke-width="1.300" /></symbol>
        <symbol id="i-mssql" viewBox="0 0 24 24"><path d="M1 1c8 0 17 3 22 10C16 14 9 17 2 23c4-7 4-15-1-22z" fill="#6d97c4" stroke="#3f6793" stroke-width="1.300" /><path d="M8 2c4 5 4 11 1 17M14 4c3 4 3 8 1 12M19 7c1 2 1 4 0 6" fill="none" stroke="#35587e" stroke-width="1.300" /></symbol>
        <symbol id="i-oracle" viewBox="0 0 24 24"><rect x="1" y="4" width="22" height="16" rx="6" fill="#6d97c4" stroke="#35587e" stroke-width="2" /></symbol>
        <symbol id="i-db2" viewBox="0 0 24 24"><rect width="24" height="24" rx="2.500" fill="#6d97c4" /><text x="12" y="15.500" text-anchor="middle" font-size="9.500" fill="#fff" font-family="Open Sans, sans-serif">DB2</text></symbol>
        <symbol id="i-globe" viewBox="0 0 24 24"><circle cx="12" cy="12" r="11" fill="#6d97c4" stroke="#35587e" /><path d="M5 5l6-2 4 4-6 4zM16 3l5 4-3 2z" fill="#b9d0ea" /></symbol>
        <symbol id="i-poly" viewBox="0 0 24 16"><path d="M2 2.500c4-2.500 6 1 10 0s7-3 10 0c2 3-1 6 0 10.500-4 3-7-2-10-1-4 1-8 3-10 0-1-3 2-6 0-9.500z" fill="#ddd" stroke="#888" stroke-width="1.400" /></symbol>
      </defs>
    </svg>

    <header class="titlebar">
      <svg class="logo" viewBox="0 0 24 24"><path d="M12 1a11 11 0 1 0 4.500 21L13 17.500A6 6 0 1 1 18 12l4 4A11 11 0 0 0 12 1z" fill="#7fae3c" /><path d="M12 12h5l6 6.500-1 4.500h-4l-6-6.500z" fill="#9bbb59" /><path d="M12 12h4l-4 4z" fill="#f0b94a" /></svg>
      <h1>*Untitled Project - QGIS [Spatial Thoughts]</h1>
      <div class="winbtns">
        <button type="button" aria-label="Minimize"><svg viewBox="0 0 12 12"><path d="M1 6.500h10" /></svg></button>
        <button type="button" aria-label="Maximize"><svg viewBox="0 0 12 12"><path d="M1.500 1.500h9v9h-9z" /></svg></button>
        <button type="button" aria-label="Close"><svg viewBox="0 0 12 12"><path d="M1 1l10 10M11 1L1 11" /></svg></button>
      </div>
    </header>

    <nav class="menubar">
      <button v-for="m in menus" :key="m.join('')" type="button">{{ m[0] }}<u>{{ m[1] }}</u>{{ m[2] }}</button>
    </nav>

    <div v-for="(bar, n) in [mainTools, layerTools]" :key="n" class="toolbar">
      <template v-for="(t, i) in bar" :key="i">
        <span v-if="t.kind === 'grip'" class="grip" :class="{ first: i === 0 }"></span>
        <button v-else-if="t.kind === 'more'" type="button" class="more" :class="t.cls" aria-label="More tools"><svg viewBox="0 0 9 8"><path d="M1 1l3 3-3 3M5 1l3 3-3 3" /></svg></button>
        <button v-else type="button" class="tool" :class="{ on: t.on, drop: t.drop }" :aria-label="t.label">
          <svg class="ic"><use :href="'#i-' + t.icon" /></svg><i v-if="t.drop" class="caret"></i><i v-if="t.tiny" class="tinycaret"></i>
        </button>
      </template>
    </div>

    <main class="body">
      <div class="left">
        <section class="dock browser">
          <div class="docktitle"><h2>Browser</h2>
            <button type="button" aria-label="Float"><svg viewBox="0 0 11 11"><rect x=".5" y=".5" width="10" height="10" rx="2" /><path d="M4.500 2.500h4v4h-4zM2.500 4.500h4v4h-4z" /></svg></button>
            <button type="button" aria-label="Close"><svg viewBox="0 0 11 11"><rect x=".5" y=".5" width="10" height="10" rx="2" /><path class="x" d="M3 3l5 5M8 3L3 8" /></svg></button>
          </div>
          <div class="minibar">
            <button v-for="t in browserTools" :key="t.icon" type="button" class="tool" :aria-label="t.label"><svg class="ic"><use :href="'#i-' + t.icon" /></svg></button>
          </div>
          <div class="pane">
            <ul class="tree">
              <li v-for="r in tree" :key="r.icon + r.name"><i class="twist" :class="{ show: r.arrow }"></i><svg class="ic"><use :href="'#i-' + r.icon" /></svg><span>{{ r.name }}</span></li>
            </ul>
            <div class="vscroll tall"><i class="up"></i><b></b><i class="down"></i></div>
          </div>
        </section>
        <div class="hsplit"></div>
        <section class="dock layers">
          <div class="docktitle"><h2>Layers</h2>
            <button type="button" aria-label="Float"><svg viewBox="0 0 11 11"><rect x=".5" y=".5" width="10" height="10" rx="2" /><path d="M4.500 2.500h4v4h-4zM2.500 4.500h4v4h-4z" /></svg></button>
            <button type="button" aria-label="Close"><svg viewBox="0 0 11 11"><rect x=".5" y=".5" width="10" height="10" rx="2" /><path class="x" d="M3 3l5 5M8 3L3 8" /></svg></button>
          </div>
          <div class="minibar">
            <button v-for="t in layersTools" :key="t.icon" type="button" class="tool" :class="{ drop: t.drop }" :aria-label="t.label"><svg class="ic"><use :href="'#i-' + t.icon" /></svg><i v-if="t.drop" class="caret"></i><i v-if="t.tiny" class="tinycaret"></i></button>
          </div>
          <div class="pane">
            <ul class="legend">
              <li class="root"><i class="open"></i><input id="layer" v-model="layerOn" type="checkbox"><svg class="poly"><use href="#i-poly" /></svg><label for="layer">seismic_zones_with_elevation</label></li>
              <li v-for="(c, i) in classes" :key="c.c"><input :id="'cls' + i" v-model="c.on" type="checkbox"><i class="swatch" :class="c.c"></i><label :for="'cls' + i">{{ c.label }}</label></li>
            </ul>
          </div>
        </section>
      </div>

      <div class="right">
        <svg class="map" viewBox="0 0 625 303" preserveAspectRatio="xMinYMin slice" role="img" aria-label="Map of seismic zones">
          <g transform="translate(0 -2) scale(.33333)" stroke="#2b3a40" stroke-width="3" stroke-linejoin="round">
            <path fill="#abd9e9" d="M522 5h18l-3 15-2 30-4 15 0 25-8 10 2 14-12 8 14 5 4 14-8 8-14 0-10 7-10-6 0-16-6-8 10-18 18-20 4-20 6-25z" />
            <path fill="#ddd" d="M495 122h22l-2 7-18 2z" />
            <path fill="#2c7bb6" d="M484 136l7 14-14 32-10 28-10 20 16 12-4 8-18 2-2-6 8-6-8-20-8-9 20-38 12-26z" />
            <path fill="#ffffbf" d="M114 328l-4-6 4-18 16-14 30-16 28-18 18-14 40 2 28-5 20 10 18 2 26 5 16-5 18 4 20-2 10-18 2-4 28-2-30 4 0 10-4 18-16 2-18-5-30 4-24-4-16-18-4 24-20 14-24 12-10 12-20 2-4-8-22 0-24-3-14 10z" />
            <path fill="none" d="M208 264l5 16M198 300l4-14" />
            <path fill="#e8e8b0" stroke-width="2" d="M104 322l14 0 6 22-14 4 12 18-14-8-4-14 12-4z" />
            <path fill="#abd9e9" d="M110 355l14 10 20 4 8-4 12 10-18 6-24-8z" />
            <path fill="#2c7bb6" d="M122 370l9 8 8 22 18 20 10 26 4 52 14 26 9 28 2 45 4 38-8 50h-32l-12-105-14-88-2-42z" />
            <path fill="#2c7bb6" d="M160 685h32l0 65-4 34 6 36 10 10-1 18 30 4 42 4 28 14 22 2-20 5 2 10 28 14-3 8-16 4-14-10-22-1-6 12-12-3 3-16-18-20-26-16-20-2-12 2-6 15 4 20 8 7 28 0-16 8-24 4-4-2-2-68-4-50-7-74z" />
            <g filter="url(#rough)">
              <template v-for="(s, i) in west" :key="i">
                <path :d="s.d" fill="none" stroke="#2f2f2f" :stroke-width="s.w" />
                <path :d="s.d" fill="none" :stroke="s.col" :stroke-width="s.f" />
              </template>
            </g>
          </g>
          <g transform="translate(307 -2) scale(.33333)" stroke="#2b3a40" stroke-width="3" stroke-linejoin="round">
            <path fill="#2c7bb6" d="M-320 0L-316 10-285 35-262 46-240 52-180 46-120 40-70 36-41 24 0 16 40 8 0 17-36 30-36 42-10 38 15 35 14 28 90 18 96 24 110 20 118 40 132 38 134 0H165L165 38 150 46 130 52 95 75 105 90 140 95 125 103 95 103 78 110Q82 120 97 140 100 160 80 160 54 158 64 130L72 108 60 103 45 112 22 108 12 106Q6 118 16 128 24 155 10 155-2 155 0 135L8 108-2 98-18 98Q-4 105-10 104 0 106 8 110 12 130 22 145 16 158 0 156-12 150-4 125L-8 108-26 110Q-24 130-8 145-10 158-28 158-36 140-30 110L-50 105-65 92-85 85-100 80-118 84-130 72-156 76-165 105-200 147-198 125-184 105-166 80-200 80-230 78-265 66-285 54-300 44-310 22z" />
            <path fill="#2c7bb6" d="M165 0L165 20 180 12 195 18 205 35 225 42 250 35 282 25 300 42 320 60 345 70 348 82 380 86 388 108 372 138 380 142 395 125 400 105 392 88 378 72 400 45 418 30 455 50 490 85 502 125 488 147 462 141 430 130 410 132 388 147 362 165 366 174 372 165 400 155 430 149 460 156 478 170 440 176 408 187 470 187 486 202 475 222 520 224 520 233 468 241 460 252 470 270 430 274 427 285 395 297 330 303 312 320 340 345 352 362 330 357 325 385 308 386 302 357 290 355 278 380 268 405 300 412 355 430 362 438 330 450 265 446 240 435 238 414 230 412 218 426 222 440 237 452 230 472 210 482 175 467 130 472 115 497 150 492 200 500 245 496 248 500 262 482 285 470 300 470 303 485 280 505 245 518 240 550 145 550 190 555 240 570 275 575 272 595 250 620 225 632 222 642 240 640 275 615 293 590 297 548 320 545 345 555 368 575 385 612 395 612 398 575 425 550 415 535 396 542 372 538 368 490 376 487 382 498 383 470 400 463 425 463 430 475 447 475 452 490 496 488 488 508 505 502 514 520 535 508 570 505 590 518 622 508 628 495 648 492 636 510 645 540 665 562 695 575 697 610 690 617 665 612 645 600 625 578 600 575 580 595 605 605 602 630 620 655 605 685H790V660H740L735 650 695 632 700 627 731 625 725 542 680 542 672 532 660 540 665 520 668 505 685 490 685 478 665 418 722 430 720 402H662V395L685 392V380L655 382V375L626 372 652 355 652 232 635 208 615 182 560 125 490 50 440 20 410 10 390 0H270L245 20 225 30 205 14 200 0z" />
            <path fill="#2c7bb6" d="M605 685L570 688 565 705 555 712 540 712 520 697 505 712 495 710 480 688 440 687 385 708 400 712 455 702 463 710 462 745 430 795 420 825 380 865 340 885 300 878 270 870 262 876 275 890 240 900 200 898 245 910 275 895 330 897 380 885 400 875 440 850 480 815 540 810 620 812 640 803 710 798 730 820 787 826 783 850 788 885 800 885 845 912 860 916H950V900L925 895 905 896 885 885 870 885 835 868 810 890 798 878 796 850 800 838 855 836 887 823 850 824 820 820 812 808 882 800 825 740 808 742 800 722 660 717 600 715 592 703 655 712 790 700V685z" />
            <g fill="#fff"><path d="M490 313Q530 300 545 285 570 255 590 245L625 224 634 232 622 268 610 300Q610 345 595 350 575 348 565 325 545 310 490 316z" /><path d="M430 393q14-8 26 3-12 10-26-3zM495 205l12-1 2 6-12 0z" /><path fill="#abd9e9" d="M160 92l24 5 14 14-10 4-20-8zM222 124l12 2 24 26-6 8-20-10zM202 88l8 0-2 6z" /><path fill="#ddd" d="M710 408l8 0-2 10z" /></g>
            <path fill="#2c7bb6" d="M855 5l30 10 30 3 20-6 14 0v-8z" />
            <path fill="#ffffbf" d="M8 425l14-26 16-6 14 6 24 0 26 10 12 8 54 10-26 6-34 8-4-8-38-14-30 2zM64 582l30 2 10 12 0 14-14-12-20-2z" />
            <path fill="#ffffbf" d="M104 880l20-4 6-12 4 14 18-2-18 10 4 10-16-8-14 6 10-10z" />
            <path fill="none" d="M30 830l20 20 60 20M32 840l20 22 40 12" />
            <g filter="url(#rough)">
              <path fill="#fdae61" d="M12 742l8 14 8 14 24 10 6 14-18 6 8 10-6 12-10-6 0 30-14 10-20 6-20-2 2-18 22 2-2-20-16-8-14-16 14-18 14-2 6-16z" />
              <path fill="none" d="M-14 800l16 10 0 20M10 790q20 20 14 50M-2 840h14" />
              <template v-for="(s, i) in east" :key="i">
                <path :d="s.d" fill="none" stroke="#2f2f2f" :stroke-width="s.w" />
                <path :d="s.d" fill="none" :stroke="s.col" :stroke-width="s.f" />
              </template>
            </g>
          </g>
        </svg>
        <div class="hsplit"></div>
        <section class="dock attrs">
          <div class="docktitle"><h2>seismic_zones_with_elevation :: Features Total: 350, Filtered: 350, Selected: 0</h2>
            <button type="button" aria-label="Float"><svg viewBox="0 0 11 11"><rect x=".5" y=".5" width="10" height="10" rx="2" /><path d="M4.500 2.500h4v4h-4zM2.500 4.500h4v4h-4z" /></svg></button>
            <button type="button" aria-label="Close"><svg viewBox="0 0 11 11"><rect x=".5" y=".5" width="10" height="10" rx="2" /><path class="x" d="M3 3l5 5M8 3L3 8" /></svg></button>
          </div>
          <div class="minibar">
            <template v-for="(t, i) in tableTools" :key="i">
              <span v-if="t.kind === 'sep'" class="sep"></span>
              <button v-else type="button" class="tool" :class="{ on: t.on, dim: t.dim }" :aria-label="t.label"><svg class="ic"><use :href="'#i-' + t.icon" /></svg></button>
            </template>
          </div>
          <div class="grid">
            <div class="gridview">
              <table>
                <colgroup><col class="cn"><col class="cd"><col class="cd"><col class="cd"></colgroup>
                <thead><tr><th></th><th scope="col">fid</th><th scope="col" class="sorted">id</th><th scope="col">elevation_mean</th></tr></thead>
                <tbody>
                  <tr v-for="r in rows" :key="r[0]"><th scope="row">{{ r[0] }}</th><td>{{ r[1] }}</td><td>{{ r[2] }}</td><td>{{ r[3] }}</td></tr>
                </tbody>
              </table>
            </div>
            <div class="vscroll short"><i class="up"></i><b></b><i class="down"></i></div>
          </div>
          <div class="gridfoot">
            <button type="button" class="showall"><svg class="ic"><use href="#i-filter" /></svg>Show All Features<i class="tinycaret"></i></button>
            <div class="views">
              <button type="button" aria-label="Form view"><svg viewBox="0 0 16 16"><path d="M1.500 1.500h13v13h-13z" fill="#fff" stroke="#9cc0e6" /><path d="M3 5h3M3 11h3" stroke="#555" stroke-width="1.500" /><path d="M8.500 3.500h4v3h-4zM8.500 9.500h4v3h-4z" fill="#dbe8f5" stroke="#5b86b5" /></svg></button>
              <button type="button" class="on" aria-label="Table view"><svg viewBox="0 0 16 16"><path d="M1.500 1.500h13v13h-13z" fill="#fff" stroke="#9cc0e6" /><path d="M1 1h14v4H1z" fill="#5b86b5" /><path d="M2 7h3M6 7h4M11 7h3M2 9.500h3M6 9.500h4M11 9.500h3M2 12h3M6 12h4M11 12h3" stroke="#9cc0e6" stroke-width="1.500" /></svg></button>
            </div>
          </div>
          <div class="callout">
            <svg class="arrow" viewBox="0 0 54 42"><path d="M53 3L14 29" stroke="#f00" stroke-width="2" /><path d="M1 38l9-15 7 10z" fill="#f00" /></svg>
          </div>
        </section>
      </div>
    </main>

    <footer class="status">
      <label class="locate"><svg viewBox="0 0 14 14"><circle cx="6" cy="6" r="4.500" /><path d="M9.500 9.500l3.500 3.500" /></svg><input type="text" placeholder="Type to locate (Ctrl+K)" aria-label="Locate"></label>
      <span class="clip ready"><span>Ready</span></span>
      <label class="clip coordl" for="coord"><span>Coordinate</span></label>
      <input id="coord" class="field coord" type="text" value="-122.4242,37.7307">
      <svg class="sic mouse" viewBox="0 0 16 16"><path d="M4 2l3-1 7 8-1 5-4 1-7-9z" fill="#ddd" stroke="#222" /><path d="M5 6l5-3M7 9l5-3M3 4l9 9M10 4l4-3M1 7l3 0M8 12l5-3" stroke="#222" stroke-width="1.500" /></svg>
      <label class="clip scalel" for="scale"><span>Scale</span></label>
      <div class="combo"><select id="scale"><option>1:63045</option></select><i class="dropbox"></i></div>
      <svg class="sic lock" viewBox="0 0 16 16"><path d="M4.500 8V5a3.500 3.500 0 0 1 7 0v3" fill="none" stroke="#888" stroke-width="2" /><rect x="2" y="7.500" width="12" height="8" rx="1" fill="#555" /></svg>
      <label class="clip magl" for="mag"><span>Magnifier</span></label>
      <div class="spin mag"><input id="mag" type="text" value="100%"><span><button type="button" aria-label="Increase magnifier"></button><button type="button" class="dn" aria-label="Decrease magnifier"></button></span></div>
      <label class="clip rotl" for="rot"><span>Rotation</span></label>
      <div class="spin rot"><input id="rot" type="text" value="0.0 °"><span><button type="button" aria-label="Increase rotation"></button><button type="button" class="dn" aria-label="Decrease rotation"></button></span></div>
      <label class="rend"><input v-model="render" type="checkbox"><span>Render</span></label>
      <button type="button" class="crs"><svg viewBox="0 0 16 16"><path d="M8 1c4 0 7 3 8 6-1 4-4 7-8 8-4-1-7-4-8-8 1-3 4-6 8-6z" fill="#666" /><path d="M0 7h16M2 4h12M2 10.500h12M8 1v14M4.500 2q-3 5 1 12M11.500 2q3 5-1 12" fill="none" stroke="#ddd" stroke-width=".8" /></svg>EPSG:4326</button>
      <button type="button" class="msg" aria-label="Messages"><svg viewBox="0 0 16 16"><path d="M8 1c5 0 8 2.500 8 6 0 3-2 5-5 5.500L11 15 8 12.800C3 13 0 10.500 0 7s3-6 8-6z" fill="#555" /><circle cx="4.500" cy="7" r="1.200" fill="#fff" /><circle cx="8" cy="7" r="1.200" fill="#fff" /><circle cx="11.500" cy="7" r="1.200" fill="#fff" /></svg></button>
    </footer>
  </div>
</template>

<style>
body { margin: 0; background: #000; }
</style>

<style scoped>
.window { box-sizing: border-box; min-height: 100vh; border: 2px solid #000; background: #efefef; color: #000; font: 11px/18px "Open Sans", "Noto Sans", sans-serif; display: flex; flex-direction: column; overflow: hidden; }
.window *, .window *::before { box-sizing: border-box; }
button { font: inherit; color: inherit; background: none; border: 0; padding: 0; margin: 0; }
input, select { font: inherit; color: inherit; margin: 0; }
h1, h2, ul { margin: 0; padding: 0; font: inherit; list-style: none; }
.defs { position: absolute; width: 0; height: 0; }

.titlebar { display: flex; align-items: center; height: 29px; background: #0063b1; color: #fff; }
.logo { width: 16px; height: 16px; margin: 0 5px; }
h1 { flex: 1; }
.winbtns { display: flex; gap: 6px; }
.winbtns button { width: 40px; height: 28px; display: flex; align-items: center; justify-content: center; }
.winbtns svg { width: 12px; height: 12px; stroke: #fff; fill: none; }

.menubar { display: flex; gap: 15px; height: 20px; padding-left: 7px; align-items: center; border-bottom: 1px solid #d2d2d2; }
.menubar u { text-underline-offset: 2px; }
.toolbar { display: flex; align-items: center; height: 39px; background: linear-gradient(#fafafa, #eee); border-bottom: 1px solid #b8b8b8; }
.grip { flex: none; width: 16px; height: 18px; }
.grip::before { content: ""; display: block; width: 6px; height: 18px; margin-left: 8px; background-image: radial-gradient(circle at 1px 1px, #b4b4b4 0, #b4b4b4 1px, transparent 1px); background-size: 3px 3px; }
.grip.first { width: 10px; }
.grip.first::before { margin-left: 3px; }
.tool { position: relative; flex: none; display: flex; align-items: center; justify-content: center; width: 33px; height: 31px; }
.toolbar .ic { width: 24px; height: 24px; }
.tool.drop { width: 45px; justify-content: flex-start; padding-left: 4px; }
.tool.on { border: 1px solid #b0b0b0; border-radius: 3px; background: #dedede; }
.tool.dim { opacity: .6; }
.caret { margin-left: 5px; border: 4px solid transparent; border-top: 4px solid #777; border-bottom: 0; }
.tinycaret { position: absolute; right: 2px; bottom: 3px; border: 3px solid transparent; border-top: 3px solid #666; border-bottom: 0; }
.more { width: 13px; height: 20px; display: flex; align-items: center; justify-content: flex-end; padding-right: 1px; }
.more.wide { width: 33px; }
.more.push { margin-left: auto; padding-right: 1px; }
.more svg { width: 9px; height: 8px; fill: none; stroke: #111; stroke-width: 2; }

.body { flex: 1; display: grid; grid-template-columns: 291px minmax(0, 1fr); column-gap: 6px; min-height: 0; }
.left, .right { display: flex; flex-direction: column; min-height: 0; }
.dock { position: relative; display: flex; flex-direction: column; min-height: 0; }
.browser { height: 308px; }
.layers { flex: 1; }
.hsplit { flex: none; height: 7px; }
.hsplit::before { content: ""; display: block; width: 18px; height: 7px; margin: 0 auto; background-image: radial-gradient(circle at 1px 2px, #b0b0b0 1px, transparent 1px); background-size: 3px 7px; }
.docktitle { display: flex; align-items: center; gap: 3px; height: 20px; padding: 0 2px 0 1px; }
.docktitle h2 { flex: 1; white-space: nowrap; }
.docktitle button, .docktitle svg { display: block; width: 11px; height: 11px; }
.docktitle svg { fill: none; stroke: #666; }
.docktitle .x { stroke-width: 2; }
.minibar { display: flex; align-items: center; height: 29px; }
.minibar .tool { width: 25px; height: 24px; }
.minibar .ic { width: 16px; height: 16px; }
.minibar .tool.drop { width: 37px; }
.minibar .tinycaret { right: 1px; }
.browser .minibar { height: 30px; }
.pane { flex: 1; display: flex; min-height: 0; background: #fff; border: 1px solid #b8b8b8; border-left: 0; overflow: hidden; }
.tree { flex: 1; padding-top: 1px; }
.tree li { display: flex; align-items: center; height: 18px; }
.tree .ic { width: 16px; height: 16px; margin: 0 6px 0 8px; }
.twist { width: 5px; height: 8px; margin-left: 5px; margin-right: 3px; }
.twist.show { border: 4px solid transparent; border-left: 5px solid #555; border-right: 0; }
.vscroll { flex: none; width: 14px; display: flex; flex-direction: column; background: #e4e4e4; border-left: 1px solid #b8b8b8; }
.vscroll i { flex: none; height: 14px; display: flex; align-items: center; justify-content: center; background: #f8f8f8; }
.vscroll i::before { content: ""; border: 4px solid transparent; }
.vscroll .up::before { border-bottom: 4px solid #555; border-top: 0; }
.vscroll .down::before { border-top: 4px solid #555; border-bottom: 0; }
.vscroll .up { border-bottom: 1px solid #b8b8b8; }
.vscroll .down { margin-top: auto; border-top: 1px solid #b8b8b8; }
.vscroll b { background: linear-gradient(90deg, #f2f2f2, #fff); border-bottom: 1px solid #b8b8b8; }
.tall b { height: 146px; }
.short b { height: 27px; }
.vscroll.short { width: 12px; }

.legend { flex: 1; padding-top: 1px; }
.legend li { display: flex; align-items: center; height: 18px; padding-left: 41px; }
.legend .root { padding-left: 4px; }
.legend input, .rend input { appearance: none; flex: none; width: 13px; height: 13px; border: 1px solid #aaa; background: #fff; border-radius: 0; }
.legend input:checked, .rend input:checked { background: #fff url("data:image/svg+xml,%3Csvg xmlns='http://www.w3.org/2000/svg' viewBox='0 0 11 11'%3E%3Cpath d='M2.500 5l2 4L9 2' fill='none' stroke='%23000' stroke-width='2'/%3E%3C/svg%3E"); }
.open { margin-right: 9px; border: 4px solid transparent; border-top: 5px solid #555; border-bottom: 0; }
.poly { width: 16px; height: 12px; margin: 0 6px 0 7px; }
.root label { font-weight: 700; text-decoration: underline; }
.swatch { width: 18px; height: 18px; margin: 0 10px 0 7px; border: 1px solid rgba(40, 40, 40, .6); border-top-width: 0; }
.c1 { background: #2c7bb6; } .c2 { background: #abd9e9; } .c3 { background: #ffffbf; } .c4 { background: #fdae61; } .c5 { background: #d7191c; }

.map { flex: 1 1 304px; width: 100%; min-height: 0; background: #fff; border: 1px solid #b8b8b8; border-width: 1px 0 1px 1px; }
.attrs { flex: none; height: 258px; }
.attrs .docktitle { padding-left: 7px; padding-right: 0; }
.attrs .minibar { padding-left: 3px; }
.attrs .tool.on { height: 24px; }
.sep { width: 7px; height: 12px; border-left: 1px solid #d0d0d0; margin-left: 4px; margin-right: -4px; }
.grid { display: flex; flex: 1; min-height: 0; border: 1px solid #b8b8b8; border-right: 0; background: #fff; }
.gridview { flex: 1; overflow: hidden; background: linear-gradient(#efefef 20px, #fff 20px); }
table { table-layout: fixed; width: 325px; border-collapse: separate; border-spacing: 0; }
.cn { width: 25px; } .cd { width: 100px; }
thead th { height: 20px; padding: 0; font-weight: 400; text-align: center; line-height: 19px; background: linear-gradient(#fdfdfd, #eee); border-right: 1px solid #c6c6c6; border-bottom: 1px solid #b8b8b8; }
thead .sorted { position: relative; padding-right: 12px; }
.sorted::before { content: ""; position: absolute; right: 4px; top: 5px; border: 4px solid transparent; border-bottom: 4px solid #555; border-top: 0; }
tbody th { text-align: left; font-weight: 400; padding: 0 0 0 2px; background: linear-gradient(90deg, #fdfdfd, #eee); border-right: 1px solid #b8b8b8; border-bottom: 1px solid #c6c6c6; }
td { height: 30px; padding: 0 3px 0 0; text-align: right; white-space: nowrap; border-right: 1px solid #c6c6c6; border-bottom: 1px solid #c6c6c6; }
tbody tr:nth-child(even) td { background: #e8e6e3; }
.gridfoot { display: flex; justify-content: space-between; align-items: center; height: 25px; padding: 0 0 0 3px; }
.showall { position: relative; display: flex; align-items: center; gap: 5px; height: 23px; padding: 0 8px 0 5px; border: 1px solid #b0b0b0; border-radius: 3px; background: linear-gradient(#fdfdfd, #eee); }
.showall .ic { width: 14px; height: 16px; }
.views { display: flex; gap: 1px; }
.views button { display: flex; align-items: center; justify-content: center; width: 23px; height: 23px; border: 1px solid #b0b0b0; border-radius: 3px; background: #fbfbfb; }
.views .on { background: #dedede; }
.views svg { width: 14px; height: 14px; }
.callout { position: absolute; left: 214px; top: 42px; width: 121px; height: 195px; border: 3px solid #f00; pointer-events: none; }
.arrow { position: absolute; left: -269px; top: -25px; width: 54px; height: 42px; overflow: visible; }

.status { display: flex; align-items: center; height: 26px; font-size: 8px; line-height: 14px; white-space: nowrap; }
.status > * { flex: none; }
.locate { display: flex; align-items: center; gap: 6px; width: 200px; height: 22px; margin-left: 1px; padding: 0 8px; border: 1px solid #aaa; border-radius: 3px; background: #fff; font-size: 11px; }
.locate svg { width: 13px; height: 13px; fill: none; stroke: #888; stroke-width: 1.500; }
.locate input { flex: 1; min-width: 0; border: 0; padding: 0; outline: 0; background: none; }
.locate input::placeholder { color: #777; opacity: 1; }
.clip { display: flex; justify-content: center; overflow: hidden; }
.ready { width: 18px; margin-left: 8px; justify-content: flex-start; }
.coordl { width: 29px; margin-left: 9px; }
.scalel { width: 12px; margin-left: 12px; }
.magl { width: 25px; margin-left: 6px; }
.rotl { width: 23px; margin-left: 9px; }
.field, .combo, .spin { height: 21px; border: 1px solid #aaa; border-radius: 3px; background: #fff; }
.coord { width: 71px; margin-left: 3px; padding: 0 3px; font-size: 7px; }
.sic { width: 16px; height: 16px; }
.mouse { margin-left: 4px; }
.lock { margin-left: 10px; }
.combo { display: flex; width: 80px; margin-left: 4px; overflow: hidden; }
.combo select { appearance: none; flex: 1; min-width: 0; border: 0; padding: 0 3px; background: #fff; }
.dropbox { display: flex; align-items: center; justify-content: center; width: 19px; border-left: 1px solid #bbb; background: #f4f4f4; }
.dropbox::before { content: ""; border: 4px solid transparent; border-top: 4px solid #555; border-bottom: 0; }
.spin { display: flex; overflow: hidden; }
.spin input { flex: 1; min-width: 0; border: 0; padding: 0 4px; }
.spin span { display: flex; flex-direction: column; width: 14px; border-left: 1px solid #bbb; background: #f6f6f6; }
.spin button { flex: 1; display: flex; align-items: center; justify-content: center; }
.spin button::before { content: ""; border: 4px solid transparent; border-bottom: 4px solid #555; border-top: 0; }
.spin .dn::before { border: 4px solid transparent; border-top: 4px solid #555; border-bottom: 0; }
.mag { width: 88px; margin-left: 2px; }
.rot { width: 84px; margin-left: 8px; }
.rend { display: flex; align-items: center; gap: 5px; margin-left: 7px; }
.crs { display: flex; align-items: center; gap: 4px; margin-left: 14px; }
.crs svg, .msg svg { width: 16px; height: 16px; display: block; }
.msg { margin-left: 14px; }
</style>
